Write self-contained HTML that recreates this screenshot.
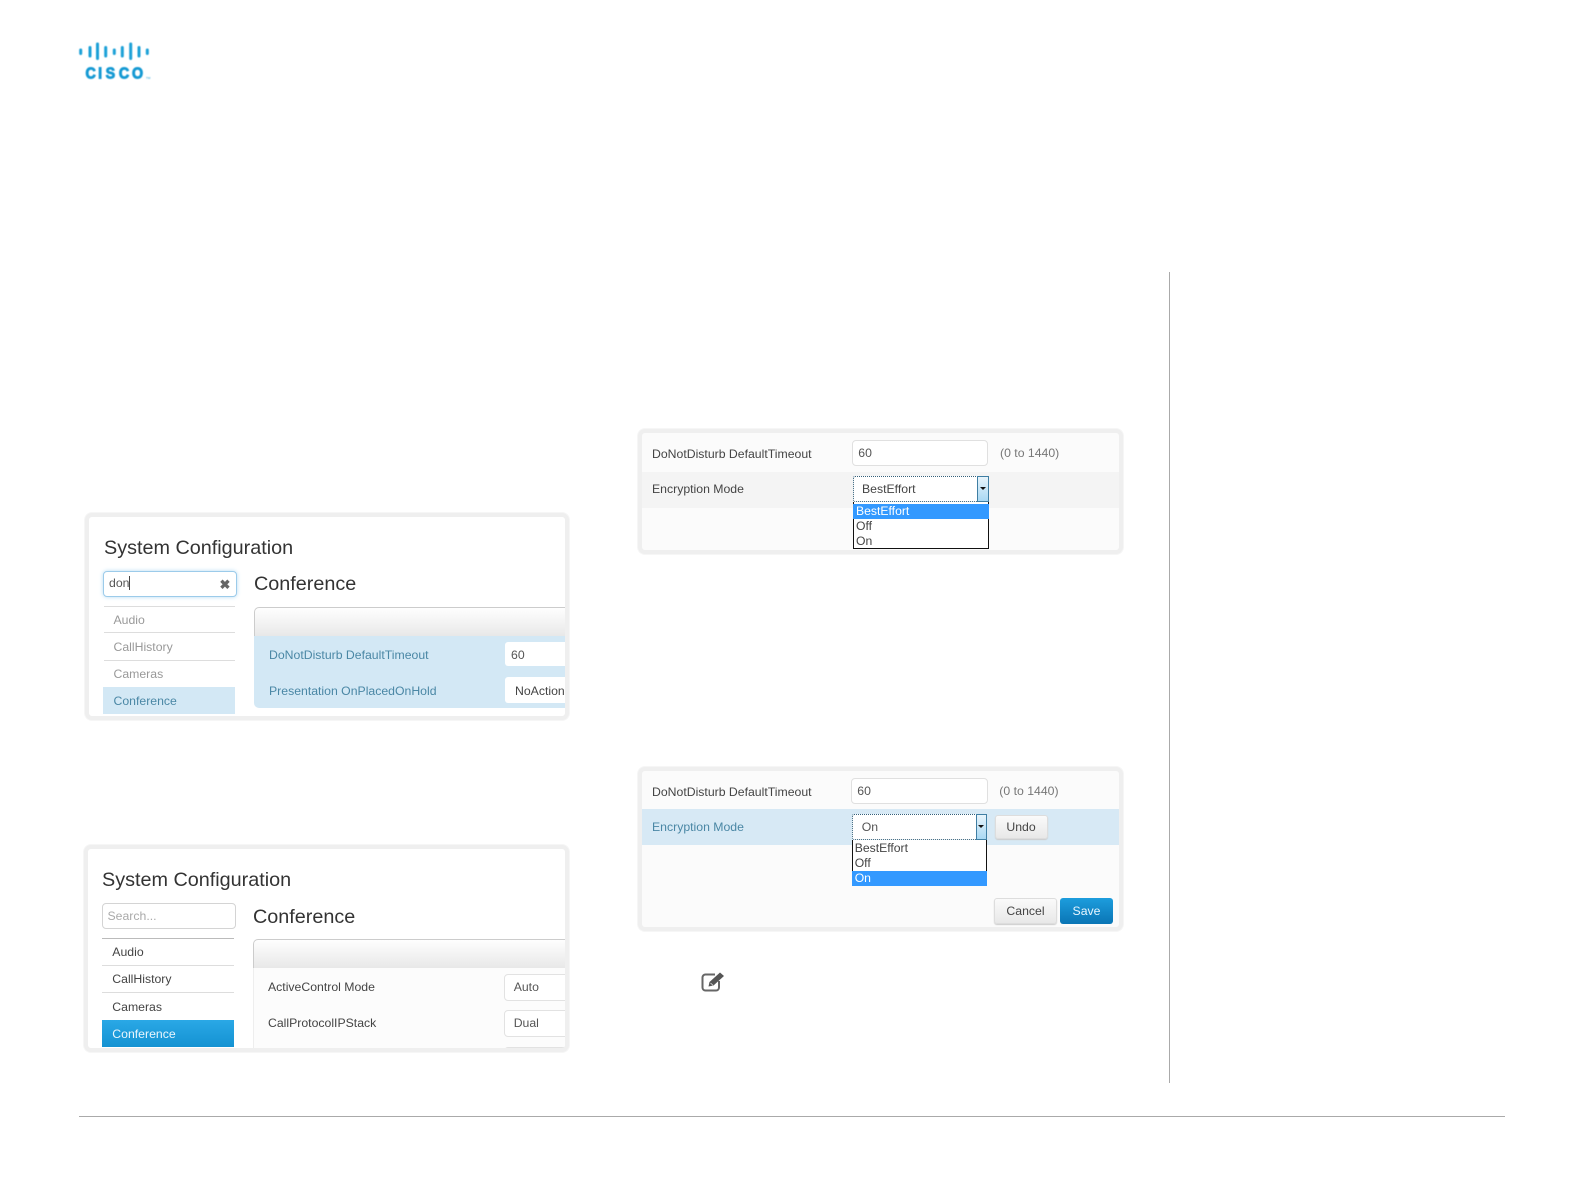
<!DOCTYPE html>
<html><head><meta charset="utf-8">
<style>
html,body{margin:0;padding:0;background:#fff}
body{width:1584px;height:1191px;position:relative;overflow:hidden;font-family:"Liberation Sans",sans-serif;font-size:12.25px;color:#444}
.a{position:absolute}
.p{position:absolute;box-sizing:border-box;border:4px solid #efefef;border-radius:7px;background:#fff;overflow:hidden;filter:blur(.35px);box-shadow:0 0 0 1px #f6f6f6}
.p>*{position:absolute;box-sizing:border-box}
.t{white-space:nowrap;line-height:14px}
.h1{font-size:19.8px;line-height:24px;color:#333;white-space:nowrap}
.nav{height:1px;background:#ddd}
.inp{background:#fff;border:1px solid #d4d4d4;border-radius:4px}
.grad{background:linear-gradient(#fefefe,#e8e8e8);border:1px solid #ccc;border-bottom:0;border-radius:5px 5px 0 0}
.btn{background:linear-gradient(#fafafa,#e8e8e8);border:1px solid #ddd;border-radius:3px;text-align:center;color:#444;box-shadow:0 1px 1px #ccc}
.opt{font-size:12.2px;line-height:15px;padding-left:3px;height:15px;color:#444}
.sel{background:#fff;border:1px dotted #34607a;border-radius:2px}
</style></head><body>

<svg class="a" style="left:74px;top:38px;filter:blur(.4px)" width="80" height="46" viewBox="74 38 80 46">
<g stroke="#1ba0d7" stroke-width="3" stroke-linecap="round" fill="none">
<path d="M80.700 50v3.500M90 47.500v8.500M97.500 44v14.500M105.700 47.500v8.500M114.300 50v3.500M122.300 47.500v8.500M130.700 44v14.500M139 47.500v8.500M147.300 50v3.500"/>
</g>
<text transform="translate(0,78.300) scale(.92,1)" x="92.900 106.700 114.800 129.200 143.500" y="0" font-family="Liberation Sans" font-weight="700" font-size="15.500" fill="#1499d3" stroke="#1499d3" stroke-width=".9">CISCO</text>
<text x="146" y="79" font-family="Liberation Sans" font-size="3" fill="#1ba0d7">TM</text>
</svg>

<div class="a" style="left:1169px;top:272px;width:1px;height:811px;background:#aaa"></div>
<div class="a" style="left:79px;top:1116px;width:1426px;height:1px;background:#aaa"></div>

<!-- Panel 1 -->
<div class="p" style="left:85px;top:513px;width:484px;height:207px">
  <div class="h1" style="left:15px;top:18.500px">System Configuration</div>
  <div class="inp" style="left:14px;top:54px;width:134px;height:26px;border-color:#9ccbea;box-shadow:0 0 4px #b5dbf3"></div>
  <div class="t" style="left:20px;top:59px;color:#555">don<span style="border-left:1px solid #444"></span></div>
  <div class="t" style="left:130.500px;top:60.500px;font-size:13px;color:#666;font-weight:700">✖</div>
  <div class="nav" style="left:15px;top:89px;width:131px"></div>
  <div class="t" style="left:24.500px;top:96px;color:#999">Audio</div>
  <div class="nav" style="left:15px;top:115px;width:131px"></div>
  <div class="t" style="left:24.500px;top:123px;color:#999">CallHistory</div>
  <div class="nav" style="left:15px;top:143px;width:131px"></div>
  <div class="t" style="left:24.500px;top:149.500px;color:#999">Cameras</div>
  <div style="left:14px;top:170px;width:132px;height:27px;background:#d3e8f5"></div>
  <div class="t" style="left:24.500px;top:177px;color:#4a87a5">Conference</div>
  <div class="h1" style="left:165px;top:55px">Conference</div>
  <div class="grad" style="left:165px;top:90px;width:320px;height:29px"></div>
  <div style="left:165px;top:119px;width:320px;height:72px;background:#d3e8f5;border-radius:0 0 0 5px"></div>
  <div class="t" style="left:180px;top:131px;color:#4a87a5">DoNotDisturb DefaultTimeout</div>
  <div class="t" style="left:180px;top:167px;color:#4a87a5">Presentation OnPlacedOnHold</div>
  <div style="left:416px;top:125px;width:70px;height:24px;background:#fff;border-radius:3px"></div>
  <div style="left:416px;top:160px;width:70px;height:26px;background:#fff;border-radius:3px"></div>
  <div class="t" style="left:422px;top:131px;color:#555">60</div>
  <div class="t" style="left:426px;top:167px;color:#444">NoAction</div>
</div>

<!-- Panel 2 -->
<div class="p" style="left:84px;top:845px;width:485px;height:207px">
  <div class="h1" style="left:14px;top:19px">System Configuration</div>
  <div class="inp" style="left:14px;top:54px;width:134px;height:26px"></div>
  <div class="t" style="left:19.500px;top:60px;color:#aaa">Search...</div>
  <div class="nav" style="left:14px;top:89px;width:132px;background:#bbb"></div>
  <div class="t" style="left:24.300px;top:96px;color:#444">Audio</div>
  <div class="nav" style="left:14px;top:116px;width:132px"></div>
  <div class="t" style="left:24.300px;top:123px;color:#444">CallHistory</div>
  <div class="nav" style="left:14px;top:143px;width:132px"></div>
  <div class="t" style="left:24.300px;top:150.500px;color:#444">Cameras</div>
  <div style="left:14px;top:171px;width:132px;height:27px;background:linear-gradient(#2aa8e6,#1492d2)"></div>
  <div class="t" style="left:24.300px;top:177.500px;color:#eaf6fd">Conference</div>
  <div class="h1" style="left:165px;top:55.500px">Conference</div>
  <div class="grad" style="left:165px;top:90px;width:320px;height:29px"></div>
  <div style="left:165px;top:119px;width:320px;height:90px;background:#fcfcfc;border-left:1px solid #eee"></div>
  <div class="t" style="left:180px;top:131px;color:#444">ActiveControl Mode</div>
  <div class="t" style="left:180px;top:167px;color:#444">CallProtocolIPStack</div>
  <div class="inp" style="left:416px;top:125px;width:72px;height:27px;border-color:#e2e2e2"></div>
  <div class="inp" style="left:416px;top:161px;width:72px;height:27px;border-color:#e2e2e2"></div>
  <div class="inp" style="left:416px;top:198px;width:72px;height:27px;border-color:#e2e2e2"></div>
  <div class="t" style="left:425.700px;top:131px;color:#555">Auto</div>
  <div class="t" style="left:425.700px;top:167px;color:#555">Dual</div>
</div>

<!-- Panel 3 -->
<div class="p" style="left:638px;top:429px;width:485px;height:125px;background:#fbfbfb">
  <div class="t" style="left:10px;top:14px;color:#444">DoNotDisturb DefaultTimeout</div>
  <div class="inp" style="left:210px;top:7px;width:136px;height:26px;border-color:#e0e0e0"></div>
  <div class="t" style="left:216.300px;top:13px;color:#555">60</div>
  <div class="t" style="left:358px;top:13px;color:#777">(0 to 1440)</div>
  <div style="left:0;top:39px;width:477px;height:36px;background:#f4f4f4"></div>
  <div class="t" style="left:10px;top:49px;color:#444">Encryption Mode</div>
  <div class="sel" style="left:211px;top:43px;width:135px;height:26px"></div>
  <div style="left:335px;top:43px;width:11.500px;height:26px;background:linear-gradient(#e8f4fb,#a9d8f3);border:1px solid #3f7ea3"></div>
  <div style="left:338px;top:54px;width:0;height:0;border:3px solid transparent;border-top:3px solid #111;border-bottom:0"></div>
  <div class="t" style="left:220px;top:48.500px;color:#444">BestEffort</div>
  <div style="left:211px;top:69px;width:135.500px;height:47px;background:#fff;border:1px solid #111;border-top:0"></div>
  <div class="opt" style="left:211px;top:70.500px;width:135.500px;background:#3399ff;color:#fff">BestEffort</div>
  <div class="opt" style="left:211px;top:85.500px">Off</div>
  <div class="opt" style="left:211px;top:100.500px">On</div>
</div>

<!-- Panel 4 -->
<div class="p" style="left:638px;top:767px;width:485px;height:164px;background:#fbfbfb">
  <div class="t" style="left:10px;top:14px;color:#444">DoNotDisturb DefaultTimeout</div>
  <div class="inp" style="left:209px;top:7px;width:137px;height:26px;border-color:#e0e0e0"></div>
  <div class="t" style="left:215.300px;top:13px;color:#555">60</div>
  <div class="t" style="left:357.300px;top:13px;color:#777">(0 to 1440)</div>
  <div style="left:0;top:38px;width:477px;height:36px;background:#d7e9f5"></div>
  <div class="t" style="left:10px;top:49px;color:#4a87a5">Encryption Mode</div>
  <div class="sel" style="left:209.700px;top:43px;width:135px;height:26px"></div>
  <div style="left:334px;top:43px;width:11px;height:26px;background:linear-gradient(#e8f4fb,#a9d8f3);border:1px solid #3f7ea3"></div>
  <div style="left:336px;top:54px;width:0;height:0;border:3px solid transparent;border-top:3px solid #111;border-bottom:0"></div>
  <div class="t" style="left:219.700px;top:48.500px;color:#555">On</div>
  <div style="left:209.700px;top:69px;width:135px;height:46px;background:#fff;border:1px solid #111;border-top:0"></div>
  <div class="opt" style="left:209.700px;top:69.700px">BestEffort</div>
  <div class="opt" style="left:209.700px;top:84.700px">Off</div>
  <div class="opt" style="left:209.700px;top:99.700px;width:135px;background:#3399ff;color:#fff">On</div>
  <div class="btn t" style="left:352.500px;top:44px;width:53px;height:24px;line-height:22px">Undo</div>
  <div class="btn t" style="left:352px;top:127px;width:63px;height:26px;line-height:25px">Cancel</div>
  <div class="t" style="left:418px;top:127px;width:53px;height:26px;line-height:27px;border-radius:3px;text-align:center;color:#e8f6ff;background:linear-gradient(#1d9ddd,#0a75b5)">Save</div>
</div>

<!-- edit icon -->
<svg class="a" style="left:700px;top:970px;filter:blur(.3px)" width="27" height="23" viewBox="0 0 27 23">
<path d="M15 4.500H5.500a3 3 0 0 0-3 3v10a3 3 0 0 0 3 3h10.500a3 3 0 0 0 3-3V11" fill="none" stroke="#666" stroke-width="2"/>
<path d="M8.500 16.500l1-4.500L20 2.500l4 3.500-10.500 9.500z" fill="#555"/>
<path d="M10.500 13l2.500 2.300" stroke="#ddd" stroke-width=".8"/>
</svg>
</body></html>
